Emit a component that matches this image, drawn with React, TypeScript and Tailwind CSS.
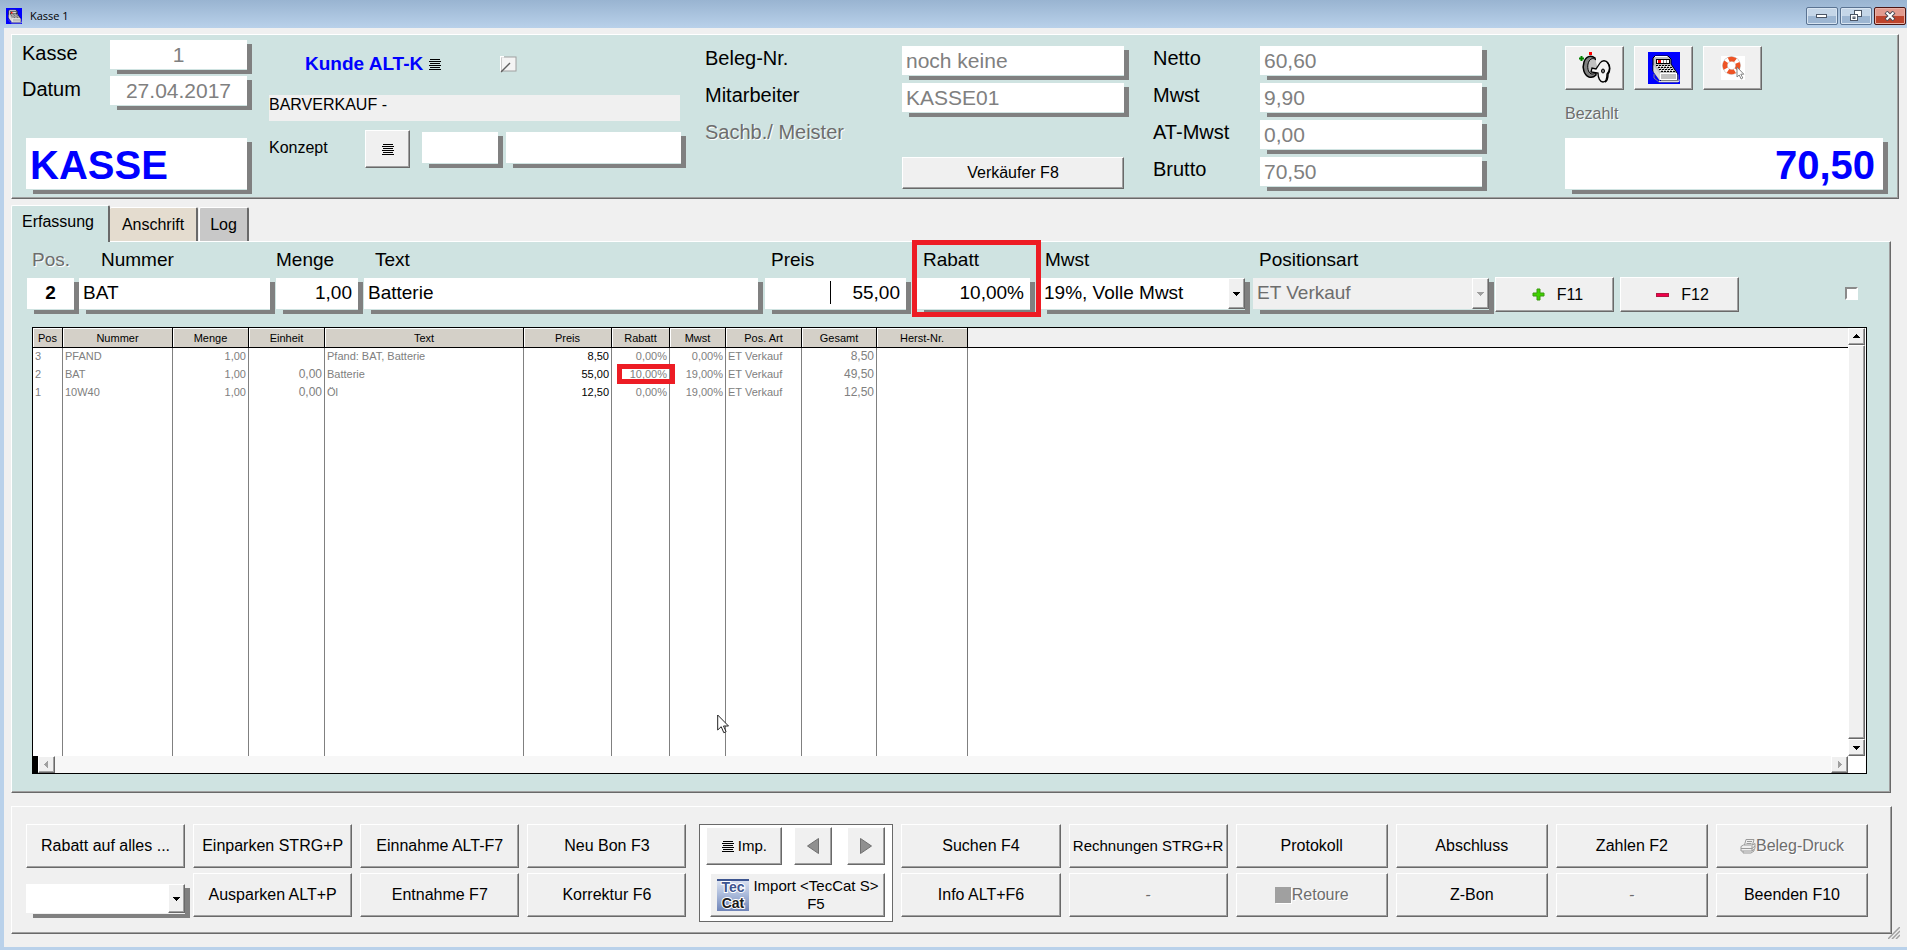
import type { InputHTMLAttributes, ButtonHTMLAttributes, ReactNode } from "react";
import clsx from "clsx";

const bevel =
  "border border-t-white border-l-white border-r-[#696969] border-b-[#696969] shadow-[inset_-1px_-1px_0_#a0a0a0]";

const embossed = "text-[#6d6d6d] [text-shadow:1px_1px_0_#fff]";

// white box with a detached grey drop shadow on the right and bottom edge
function Shadowed({ className, children }: { className?: string; children: ReactNode }) {
  return (
    <div
      className={clsx(
        "flex bg-no-repeat pr-[5px] pb-[5px] [background-image:linear-gradient(#808080,#808080),linear-gradient(#808080,#808080)] [background-position:right_bottom,right_bottom] [background-size:5px_calc(100%_-_4px),calc(100%_-_7px)_4px]",
        className
      )}
    >
      {children}
    </div>
  );
}

type FieldProps = InputHTMLAttributes<HTMLInputElement> & { box?: string };

function Field({ box, className, ...props }: FieldProps) {
  return (
    <Shadowed className={box}>
      <input
        type="text"
        readOnly
        className={clsx("w-full min-w-0 flex-1 bg-white outline-none", className)}
        {...props}
      />
    </Shadowed>
  );
}

function ClassicButton({ className, children, ...props }: ButtonHTMLAttributes<HTMLButtonElement>) {
  return (
    <button
      type="button"
      className={clsx("flex items-center justify-center bg-[#f0f0f0] whitespace-nowrap", bevel, className)}
      {...props}
    >
      {children}
    </button>
  );
}

function DropArrow({ disabled }: { disabled?: boolean }) {
  return (
    <span className={clsx("flex w-[17px] shrink-0 items-center justify-center bg-[#f0f0f0]", bevel)}>
      <svg width="7" height="4" viewBox="0 0 7 4" shapeRendering="crispEdges">
        <path d="M0 0h7L3.5 4z" fill={disabled ? "#a0a0a0" : "#000"} />
      </svg>
    </span>
  );
}

function LinesIcon() {
  return (
    <svg width="12" height="11" viewBox="0 0 12 11" shapeRendering="crispEdges">
      <path
        d="M1 .5h10M0 2.5h12M1 4.5h10M0 6.5h12M1 8.5h10M0 10.5h12"
        stroke="#000"
        strokeWidth="1"
      />
    </svg>
  );
}

function RegisterIcon({ size }: { size: number }) {
  return (
    <svg width={size} height={size} viewBox="0 0 32 32">
      <rect width="32" height="32" fill="#0000ff" />
      <path d="M5 6l2-2h13l3 3v5l6 9v7H12l-7-9z" fill="#c0c0c0" stroke="#000" />
      <path d="M5.5 13l6.500 9v7l-6.500-9z" fill="#d8d8d8" />
      <path d="M7 4.500h12.500" stroke="#fff" />
      <rect x="8.500" y="7.500" width="13" height="4" fill="#fff" stroke="#000" />
      <rect x="10" y="8" width="3" height="3" fill="#ff0000" />
      <path d="M15.500 8v3M18.500 8v3" stroke="#808080" />
      <path d="M7 13h15l6.500 8H13z" fill="#c0c0c0" />
      <path
        d="M8 13.500h14M10 15.500h14M11 17.500h14M13 19.500h14"
        stroke="#000"
        strokeDasharray="2 1"
      />
      <path d="M9 14.500h14M11 16.500h14M12 18.500h14" stroke="#fff" strokeDasharray="1 2" />
      <rect x="12.500" y="21.500" width="16" height="6" fill="#c0c0c0" stroke="#fff" />
      <path d="M13 28.500h17v-6M6 22v4l5 4h19" fill="none" stroke="#808080" />
      <path d="M11 29.500h20v-2" fill="none" stroke="#e0e0e0" />
    </svg>
  );
}

function KeyIcon() {
  return (
    <svg width="34" height="32" viewBox="0 0 34 32">
      <path d="M1 6.500h5M3.500 4v5" stroke="#008000" strokeWidth="2" />
      <rect x="11" y="0" width="3" height="3" fill="#ff0000" />
      <path
        d="M17 6C13 3 8 4 6 10c-2 6 0 13 5 15 3 1 5 0 7-2z"
        fill="#808080"
        stroke="#000"
        strokeWidth="1.500"
      />
      <path d="M18 8c-3-3-7-1-8 4s1 10 4 10c2 0 3-1 4-2" fill="#c0c0c0" stroke="#000" />
      <path
        d="M22 11c2-3 6-3 8 0 2 4 2 8-1 11 0 5-1 8-4 8s-5-4-5-9l-7-1 1-4 4 1z"
        fill="#f4f4f4"
        stroke="#000"
        strokeWidth="1.300"
      />
      <path d="M29 10c4 4 3 9 1 12 0 4-1 7-3 8" fill="none" stroke="#000" strokeWidth="1.500" />
      <ellipse cx="25" cy="19" rx="1.500" ry="2" fill="#808080" stroke="#000" />
    </svg>
  );
}

function HelpIcon() {
  return (
    <svg width="24" height="24" viewBox="0 0 24 24">
      <rect width="24" height="24" fill="#fff" />
      <circle cx="10.500" cy="9.500" r="6.500" fill="none" stroke="#b9b0ac" strokeWidth="5.500" />
      <circle cx="10.500" cy="9.500" r="6.500" fill="none" stroke="#fff" strokeWidth="4.500" />
      <circle
        cx="10.500"
        cy="9.500"
        r="6.500"
        fill="none"
        stroke="#ee5324"
        strokeWidth="4.500"
        strokeDasharray="6.810 3.400"
        strokeDashoffset="-1.700"
        transform="rotate(45 10.500 9.500)"
      />
      <path
        d="M16 11v10l2.200-2 2 4 1.600-1-2-3.800h3z"
        fill="#fff"
        stroke="#777"
        strokeWidth=".9"
      />
    </svg>
  );
}

function PrinterIcon() {
  return (
    <svg width="16" height="15" viewBox="0 0 16 15" fill="none" stroke="#9a9a9a">
      <path d="M4.500 6L6 .500h8L12.500 6M7 2.500h5M6.500 4.500h5" />
      <path d="M1 7.500L3.500 6h9l2.500-1.500v5L12 12H1z" />
      <path d="M1 9.500h11L15 7M3 12v2h8l3-2v-2M12 7v5" />
    </svg>
  );
}

function TecCatLogo() {
  return (
    <svg width="32" height="32" viewBox="0 0 32 32" className="shrink-0">
      <defs>
        <linearGradient id="teccat" x1="0" y1="0" x2="0" y2="1">
          <stop offset="0" stopColor="#dfe6f3" />
          <stop offset=".5" stopColor="#a9b9da" />
          <stop offset="1" stopColor="#6f84b8" />
        </linearGradient>
      </defs>
      <rect width="32" height="32" fill="url(#teccat)" />
      <rect width="32" height="2" fill="#3d5590" />
      <g
        fontFamily="Liberation Sans, sans-serif"
        fontSize="14"
        fontWeight="700"
        textAnchor="middle"
        stroke="#fff"
        strokeWidth="2"
        paintOrder="stroke"
      >
        <text x="16" y="13" fill="#3d5590">Tec</text>
        <text x="16" y="29" fill="#1a1a1a">Cat</text>
      </g>
    </svg>
  );
}

function TitleBar() {
  return (
    <header className="flex h-7 items-start bg-linear-to-b from-[#99b4d1] to-[#b9d1ea] pl-1.5">
      <span className="mt-2">
        <RegisterIcon size={16} />
      </span>
      <h1 className="mt-2 ml-2 font-['Open_Sans',sans-serif] text-[11px] leading-4">Kasse 1</h1>
      <div className="mt-[7px] mr-px ml-auto flex gap-0.5">
        <button
          type="button"
          aria-label="Minimieren"
          className="flex h-[18px] w-8 items-center justify-center rounded-xs border border-[#5a7392] bg-linear-to-b from-[#c5d6e8] from-50% to-[#9db6d2] to-50% shadow-[inset_0_0_0_1px_#d8e5f2]"
        >
          <svg width="12" height="6" viewBox="0 0 12 6">
            <rect x=".5" y="1.500" width="10" height="3" fill="#fff" stroke="#4b5565" />
          </svg>
        </button>
        <button
          type="button"
          aria-label="Wiederherstellen"
          className="flex h-[18px] w-8 items-center justify-center rounded-xs border border-[#5a7392] bg-linear-to-b from-[#c5d6e8] from-50% to-[#9db6d2] to-50% shadow-[inset_0_0_0_1px_#d8e5f2]"
        >
          <svg width="12" height="12" viewBox="0 0 12 12" fill="#fff" stroke="#4b5565">
            <rect x="4.500" y=".5" width="7" height="6" />
            <rect x=".5" y="4.500" width="7" height="6" />
            <rect x="3" y="7" width="2" height="1.500" />
          </svg>
        </button>
        <button
          type="button"
          aria-label="Schließen"
          className="flex h-[18px] w-8 items-center justify-center rounded-xs border border-[#4b1512] bg-linear-to-b from-[#e29a8e] from-50% to-[#bd432c] to-50% shadow-[inset_0_0_0_1px_#eab1a6]"
        >
          <svg width="12" height="10" viewBox="0 0 12 10">
            <path d="M2 1l8 8M10 1L2 9" stroke="#4b4b55" strokeWidth="4" />
            <path d="M2.500 1.500l7 7M9.500 1.500l-7 7" stroke="#fff" strokeWidth="2" />
          </svg>
        </button>
      </div>
    </header>
  );
}

const totals = [
  { id: "netto", label: "Netto", value: "60,60" },
  { id: "mwst-betrag", label: "Mwst", value: "9,90" },
  { id: "at-mwst", label: "AT-Mwst", value: "0,00" },
  { id: "brutto", label: "Brutto", value: "70,50" },
];

function HeaderPanel() {
  const grey = "text-[21px] text-[#808080]";
  return (
    <section className={clsx("mr-2 ml-[7px] flex bg-[#cfe3e1] pr-2.5 pb-1 pl-2.5", bevel)}>
      <div className="w-[230px] shrink-0 pt-[5px]">
        <div className="grid grid-cols-[88px_142px] gap-y-0.5">
          <label htmlFor="kasse" className="mt-px text-xl leading-6">Kasse</label>
          <Field id="kasse" defaultValue="1" box="h-[34px]" className={clsx("text-center", grey)} />
          <label htmlFor="datum" className="mt-px text-xl leading-6">Datum</label>
          <Field id="datum" defaultValue="27.04.2017" box="h-[34px]" className={clsx("text-center", grey)} />
        </div>
        <Field
          aria-label="Belegart"
          defaultValue="KASSE"
          box="mt-7 ml-1 h-14"
          className="px-1 pt-0.5 text-[40px] font-bold text-[#0000ff]"
        />
      </div>

      <div className="ml-[17px] w-[417px] shrink-0 pt-[17px]">
        <div className="flex h-6 items-center pl-9">
          <button type="button" className="flex items-center gap-1.5 text-[19px] leading-6 font-bold text-[#0000ff]">
            Kunde ALT-K <LinesIcon />
          </button>
          <button type="button" aria-label="Kunde bearbeiten" className="ml-[59px]">
            <svg width="17" height="17" viewBox="0 0 17 17">
              <rect x="1" y="1" width="15" height="14" fill="#f4f4f4" stroke="#a0a0a0" />
              <path d="M0 0v16M0 .5h4" stroke="#fff" strokeWidth="2" />
              <path d="M1 16l9-9" stroke="#606060" strokeWidth="1.500" />
            </svg>
          </button>
        </div>
        <p className="mt-[19px] mr-1.5 h-[26px] bg-[#f0f0f0] text-base leading-5">BARVERKAUF -</p>
        <div className="mt-[9px] flex items-start">
          <label htmlFor="konzept" className="mt-2 w-24 text-base leading-5">Konzept</label>
          <ClassicButton aria-label="Konzept auswählen" className="h-[38px] w-[45px]">
            <LinesIcon />
          </ClassicButton>
          <Field id="konzept" box="mt-0.5 ml-3 h-9 w-[81px]" />
          <Field aria-label="Konzept Bezeichnung" box="mt-0.5 ml-[3px] h-9 w-[180px]" />
        </div>
      </div>

      <div className="ml-[19px] grid shrink-0 grid-cols-[197px_227px] auto-rows-[34px] gap-y-[3px] pt-[11px]">
        <label htmlFor="beleg" className="text-xl leading-6">Beleg-Nr.</label>
        <Field id="beleg" defaultValue="noch keine" className={clsx("px-1", grey)} />
        <label htmlFor="mitarbeiter" className="text-xl leading-6">Mitarbeiter</label>
        <Field id="mitarbeiter" defaultValue="KASSE01" className={clsx("px-1", grey)} />
        <span className={clsx("col-span-2 text-xl leading-6", embossed)}>Sachb./ Meister</span>
        <ClassicButton className="col-start-2 mr-[5px] h-8 text-base">Verkäufer F8</ClassicButton>
      </div>

      <div className="ml-6 grid shrink-0 grid-cols-[107px_227px] auto-rows-[34px] gap-y-[3px] pt-[11px]">
        {totals.map((t) => (
          <div key={t.id} className="contents">
            <label htmlFor={t.id} className="text-xl leading-6">{t.label}</label>
            <Field id={t.id} defaultValue={t.value} className={clsx("px-1", grey)} />
          </div>
        ))}
      </div>

      <div className="ml-auto w-[323px] pt-[11px]">
        <div className="flex gap-2.5">
          <ClassicButton aria-label="Anmelden" className="h-11 w-[59px]"><KeyIcon /></ClassicButton>
          <ClassicButton aria-label="Kasse öffnen" className="h-11 w-[59px]"><RegisterIcon size={32} /></ClassicButton>
          <ClassicButton aria-label="Hilfe" className="h-11 w-[59px]"><HelpIcon /></ClassicButton>
        </div>
        <label htmlFor="bezahlt" className={clsx("mt-3.5 block text-base leading-5", embossed)}>Bezahlt</label>
        <Field
          id="bezahlt"
          defaultValue="70,50"
          box="mt-3.5 h-14"
          className="px-2 pt-0.5 text-right text-[40px] font-bold text-[#0000ff]"
        />
      </div>
    </section>
  );
}

function EntryRow() {
  const label = "mb-1.5 block text-[19px] leading-6";
  const input = "text-[19px]";
  return (
    <div className="flex items-end">
      <div className="w-[52px]">
        <label htmlFor="pos" className={clsx(label, embossed, "pl-[5px]")}>Pos.</label>
        <Field id="pos" defaultValue="2" box="h-9" className={clsx(input, "text-center font-bold")} />
      </div>
      <div className="w-[197px] pr-px">
        <label htmlFor="nummer" className={clsx(label, "pl-[22px]")}>Nummer</label>
        <Field id="nummer" defaultValue="BAT" box="h-9" className={clsx(input, "px-1")} />
      </div>
      <div className="w-[88px] pr-px">
        <label htmlFor="menge" className={label}>Menge</label>
        <Field id="menge" defaultValue="1,00" box="h-9" className={clsx(input, "px-1.5 text-right")} />
      </div>
      <div className="min-w-0 flex-1 pr-0.5">
        <label htmlFor="text" className={clsx(label, "pl-[11px]")}>Text</label>
        <Field id="text" defaultValue="Batterie" box="h-9" className={clsx(input, "px-1")} />
      </div>
      <div className="relative w-[152px] pr-1.5">
        <label htmlFor="preis" className={clsx(label, "pl-1.5")}>Preis</label>
        <Field id="preis" defaultValue="55,00" box="h-9" className={clsx(input, "px-1.5 text-right")} />
        <span className="absolute right-[86px] bottom-[10px] h-[23px] w-px bg-black" />
      </div>
      <div className="relative w-[123px] pr-[5px]">
        <label htmlFor="rabatt" className={clsx(label, "pl-1.5")}>Rabatt</label>
        <Field id="rabatt" defaultValue="10,00%" box="h-9" className={clsx(input, "px-1.5 text-right")} />
        <span className="pointer-events-none absolute -top-2 -right-px -bottom-[3px] -left-[5px] z-10 border-[5px] border-[#ed1c24]" />
      </div>
      <div className="w-[213px] pr-[3px]">
        <label htmlFor="mwst" className={clsx(label, "pl-[5px]")}>Mwst</label>
        <Shadowed className="h-9">
          <select id="mwst" className={clsx(input, "min-w-0 flex-1 appearance-none bg-white pl-1 outline-none")}>
            <option>19%, Volle Mwst</option>
          </select>
          <DropArrow />
        </Shadowed>
      </div>
      <div className="w-[242px] pr-px">
        <label htmlFor="art" className={clsx(label, "pl-1.5")}>Positionsart</label>
        <Shadowed className="h-9">
          <select
            id="art"
            disabled
            className={clsx(input, "min-w-0 flex-1 appearance-none bg-[#f0f0f0] pl-1 text-[#6d6d6d] opacity-100")}
          >
            <option>ET Verkauf</option>
          </select>
          <DropArrow disabled />
        </Shadowed>
      </div>
      <ClassicButton className="mb-0.5 h-[35px] w-[119px] gap-3 pl-1.5 text-base">
        <svg width="13" height="13" viewBox="0 0 13 13">
          <path d="M5 1h3v4h4v3H8v4H5V8H1V5h4z" fill="#3fd200" stroke="#3a9a10" />
        </svg>
        F11
      </ClassicButton>
      <ClassicButton className="mb-0.5 ml-1.5 h-[35px] w-[119px] gap-3 pl-1.5 text-base">
        <svg width="13" height="13" viewBox="0 0 13 13">
          <rect x=".5" y="5.500" width="12" height="3" fill="#f0004c" stroke="#b01840" />
        </svg>
        F12
      </ClassicButton>
      <input
        type="checkbox"
        aria-label="Position markieren"
        className="mr-[9px] mb-3.5 ml-[106px] size-[13px] appearance-none border-2 border-t-[#8a8a8a] border-r-white border-b-white border-l-[#8a8a8a] bg-white"
      />
    </div>
  );
}

const columns = [
  { title: "Pos", width: "w-[30px]" },
  { title: "Nummer", width: "w-[110px]" },
  { title: "Menge", width: "w-[76px]" },
  { title: "Einheit", width: "w-[76px]" },
  { title: "Text", width: "w-[199px]" },
  { title: "Preis", width: "w-[88px]" },
  { title: "Rabatt", width: "w-[58px]" },
  { title: "Mwst", width: "w-[56px]" },
  { title: "Pos. Art", width: "w-[76px]" },
  { title: "Gesamt", width: "w-[75px]" },
  { title: "Herst-Nr.", width: "w-[91px]" },
];

const cellStyle = [
  "",
  "",
  "text-right",
  "text-right text-xs",
  "",
  "text-right text-black",
  "text-right",
  "text-right",
  "",
  "text-right text-xs",
  "",
];

const positions = [
  ["3", "PFAND", "1,00", "", "Pfand: BAT, Batterie", "8,50", "0,00%", "0,00%", "ET Verkauf", "8,50", ""],
  ["2", "BAT", "1,00", "0,00", "Batterie", "55,00", "10,00%", "19,00%", "ET Verkauf", "49,50", ""],
  ["1", "10W40", "1,00", "0,00", "Öl", "12,50", "0,00%", "19,00%", "ET Verkauf", "12,50", ""],
];

function ScrollButton({ d, label, muted }: { d: string; label: string; muted?: boolean }) {
  return (
    <ClassicButton aria-label={label} className="size-[17px] shrink-0">
      <svg width="7" height="7" viewBox="0 0 7 7" shapeRendering="crispEdges">
        <path d={d} fill={muted ? "#a0a0a0" : "#000"} />
      </svg>
    </ClassicButton>
  );
}

function PositionsTable() {
  return (
    <div className="relative mt-[13px] ml-[5px] border border-black bg-white">
      <div className="flex">
        <table className="min-w-0 flex-1 table-fixed border-separate border-spacing-0">
          <thead>
            <tr className="h-5 text-[11px] leading-4">
              {columns.map((c) => (
                <th
                  key={c.title}
                  className={clsx(
                    "border-r border-b border-black bg-[#d4d0c8] p-0 text-center font-normal shadow-[inset_1px_1px_0_#fff]",
                    c.width
                  )}
                >
                  {c.title}
                </th>
              ))}
              <th aria-hidden="true" className="border-b border-black bg-[#f0f0f0] p-0" />
            </tr>
          </thead>
          <tbody className="text-[11px] text-[#808080]">
            {positions.map((row) => (
              <tr key={row[0]} className="h-[18px]">
                {row.map((value, i) => (
                  <td
                    key={i}
                    className={clsx(
                      "relative border-r border-[#808080] p-0 px-0.5 align-top leading-4 whitespace-nowrap",
                      cellStyle[i]
                    )}
                  >
                    {value}
                    {value === "10,00%" && (
                      <span className="pointer-events-none absolute -top-0.5 -right-1.5 z-10 h-5 w-[58px] border-[5px] border-[#ed1c24]" />
                    )}
                  </td>
                ))}
                <td />
              </tr>
            ))}
            <tr className="h-[354px]">
              {columns.map((c) => (
                <td key={c.title} className="border-r border-[#808080] p-0" />
              ))}
              <td />
            </tr>
          </tbody>
        </table>
        <div className="mr-px flex w-[17px] flex-col">
          <ScrollButton label="Nach oben" d="M0 5h7L3.500 1z" />
          <div className={clsx("flex-1 bg-[#f0f0f0]", bevel)} />
          <ScrollButton label="Nach unten" d="M0 2h7L3.500 6z" />
        </div>
      </div>
      <div className="flex h-[17px]">
        <span className="w-[5px] bg-black" />
        <ScrollButton label="Nach links" d="M5 0v7L1 3.500z" muted />
        <div className="flex-1 bg-[#f7f7f7]" />
        <ScrollButton label="Nach rechts" d="M2 0v7l4-3.500z" muted />
        <span className="w-[18px] bg-white" />
      </div>
      <svg
        width="13"
        height="20"
        viewBox="0 0 13 20"
        className="pointer-events-none absolute top-[386px] left-[684px]"
      >
        <path d="M.7 1v15l3.500-3.300 2.600 6 2.300-1-2.600-5.700h5z" fill="#fff" stroke="#222" />
      </svg>
    </div>
  );
}

function EntryPanel() {
  return (
    <section className="mt-1.5 mr-4 ml-[7px]">
      <div role="tablist" className="flex items-end">
        <button
          type="button"
          role="tab"
          aria-selected="true"
          className="relative z-10 -mb-px h-[37px] w-[99px] rounded-t-xs border-t border-r-2 border-l border-t-white border-r-[#696969] border-l-white bg-[#cfe3e1] pr-1 pb-1 text-base"
        >
          Erfassung
        </button>
        <button
          type="button"
          role="tab"
          aria-selected="false"
          className="h-[34px] w-[88px] rounded-t-xs border-t border-r-2 border-t-white border-r-[#696969] bg-[#e4dccf] text-base"
        >
          Anschrift
        </button>
        <button
          type="button"
          role="tab"
          aria-selected="false"
          className="ml-px h-[34px] w-[50px] rounded-t-xs border-t border-r-2 border-l border-t-white border-r-[#696969] border-l-white bg-[#c8c8c8] text-base"
        >
          Log
        </button>
      </div>
      <div role="tabpanel" className={clsx("bg-[#cfe3e1] pt-1.5 pr-[23px] pb-[18px] pl-[15px]", bevel)}>
        <EntryRow />
        <PositionsTable />
      </div>
    </section>
  );
}

function ActionPair({ top, bottom, narrow }: { top: ReactNode; bottom: ReactNode; narrow?: boolean }) {
  return (
    <div className={clsx("flex min-w-0 flex-col gap-[5px]", narrow ? "flex-[152_1_0px]" : "flex-[159_1_0px]")}>
      {top}
      {bottom}
    </div>
  );
}

type ActionProps = { children: ReactNode; disabled?: boolean; small?: boolean };

function Action({ children, disabled, small }: ActionProps) {
  return (
    <ClassicButton
      disabled={disabled}
      className={clsx("h-11", small ? "text-[15px]" : "text-base", disabled && embossed)}
    >
      {children}
    </ClassicButton>
  );
}

function ActionPanel() {
  return (
    <section className={clsx("mt-[13px] mr-[15px] ml-[7px] flex gap-2 pt-[17px] pr-[23px] pb-[11px] pl-3.5", bevel)}>
      <ActionPair
        top={<Action>Rabatt auf alles ...</Action>}
        bottom={
          <Shadowed className="mt-[11px] -mr-[5px] h-[34px]">
            <select aria-label="Rabatt" className="min-w-0 flex-1 appearance-none bg-white outline-none">
              <option></option>
            </select>
            <DropArrow />
          </Shadowed>
        }
      />
      <ActionPair top={<Action>Einparken STRG+P</Action>} bottom={<Action>Ausparken ALT+P</Action>} />
      <ActionPair top={<Action>Einnahme ALT-F7</Action>} bottom={<Action>Entnahme F7</Action>} />
      <ActionPair top={<Action>Neu Bon F3</Action>} bottom={<Action>Korrektur F6</Action>} />

      <div className="ml-[5px] h-[98px] w-[194px] border border-[#696969] bg-white pt-0.5 pr-[7px] pl-1.5">
        <div className="flex">
          <ClassicButton className="h-[38px] w-[76px] gap-1 text-[15px]">
            <LinesIcon />
            Imp.
          </ClassicButton>
          <ClassicButton aria-label="Zurück" className="ml-3 h-[38px] w-[38px]">
            <svg width="12" height="16" viewBox="0 0 12 16">
              <path d="M11.500.5v15L.5 8z" fill="#909090" stroke="#707070" />
            </svg>
          </ClassicButton>
          <ClassicButton aria-label="Weiter" className="ml-auto h-[38px] w-[38px]">
            <svg width="12" height="16" viewBox="0 0 12 16">
              <path d="M.5.5v15l11-7.500z" fill="#909090" stroke="#707070" />
            </svg>
          </ClassicButton>
        </div>
        <ClassicButton className="mt-2 ml-1 h-11 w-[175px] gap-1 text-[15px] leading-[18px]">
          <TecCatLogo />
          <span>
            Import &lt;TecCat S&gt;
            <br />
            F5
          </span>
        </ClassicButton>
      </div>

      <ActionPair top={<Action>Suchen F4</Action>} bottom={<Action>Info ALT+F6</Action>} />
      <ActionPair top={<Action small>Rechnungen STRG+R</Action>} bottom={<Action disabled>-</Action>} />
      <ActionPair
        narrow
        top={<Action>Protokoll</Action>}
        bottom={
          <Action disabled>
            <span className="mr-px size-4 bg-[#a0a0a0] shadow-[1px_1px_0_#fff]" />
            Retoure
          </Action>
        }
      />
      <ActionPair narrow top={<Action>Abschluss</Action>} bottom={<Action>Z-Bon</Action>} />
      <ActionPair narrow top={<Action>Zahlen F2</Action>} bottom={<Action disabled>-</Action>} />
      <ActionPair
        narrow
        top={
          <Action disabled>
            <PrinterIcon />
            Beleg-Druck
          </Action>
        }
        bottom={<Action>Beenden F10</Action>}
      />
    </section>
  );
}

export default function App() {
  return (
    <div className="flex min-h-screen flex-col font-['Liberation_Sans',Arial,sans-serif] text-black">
      <TitleBar />
      <main className="relative flex-1 border-b-[3px] border-l-4 border-[#b9d1ea] bg-[#f0f0f0] pt-1.5 pb-[13px]">
        <HeaderPanel />
        <EntryPanel />
        <ActionPanel />
        <svg width="12" height="12" viewBox="0 0 12 12" className="absolute right-[7px] bottom-2">
          <path d="M0 12L12 0M4 12l8-8M8 12l4-4" stroke="#a0a0a0" strokeWidth="1.500" />
        </svg>
      </main>
    </div>
  );
}
